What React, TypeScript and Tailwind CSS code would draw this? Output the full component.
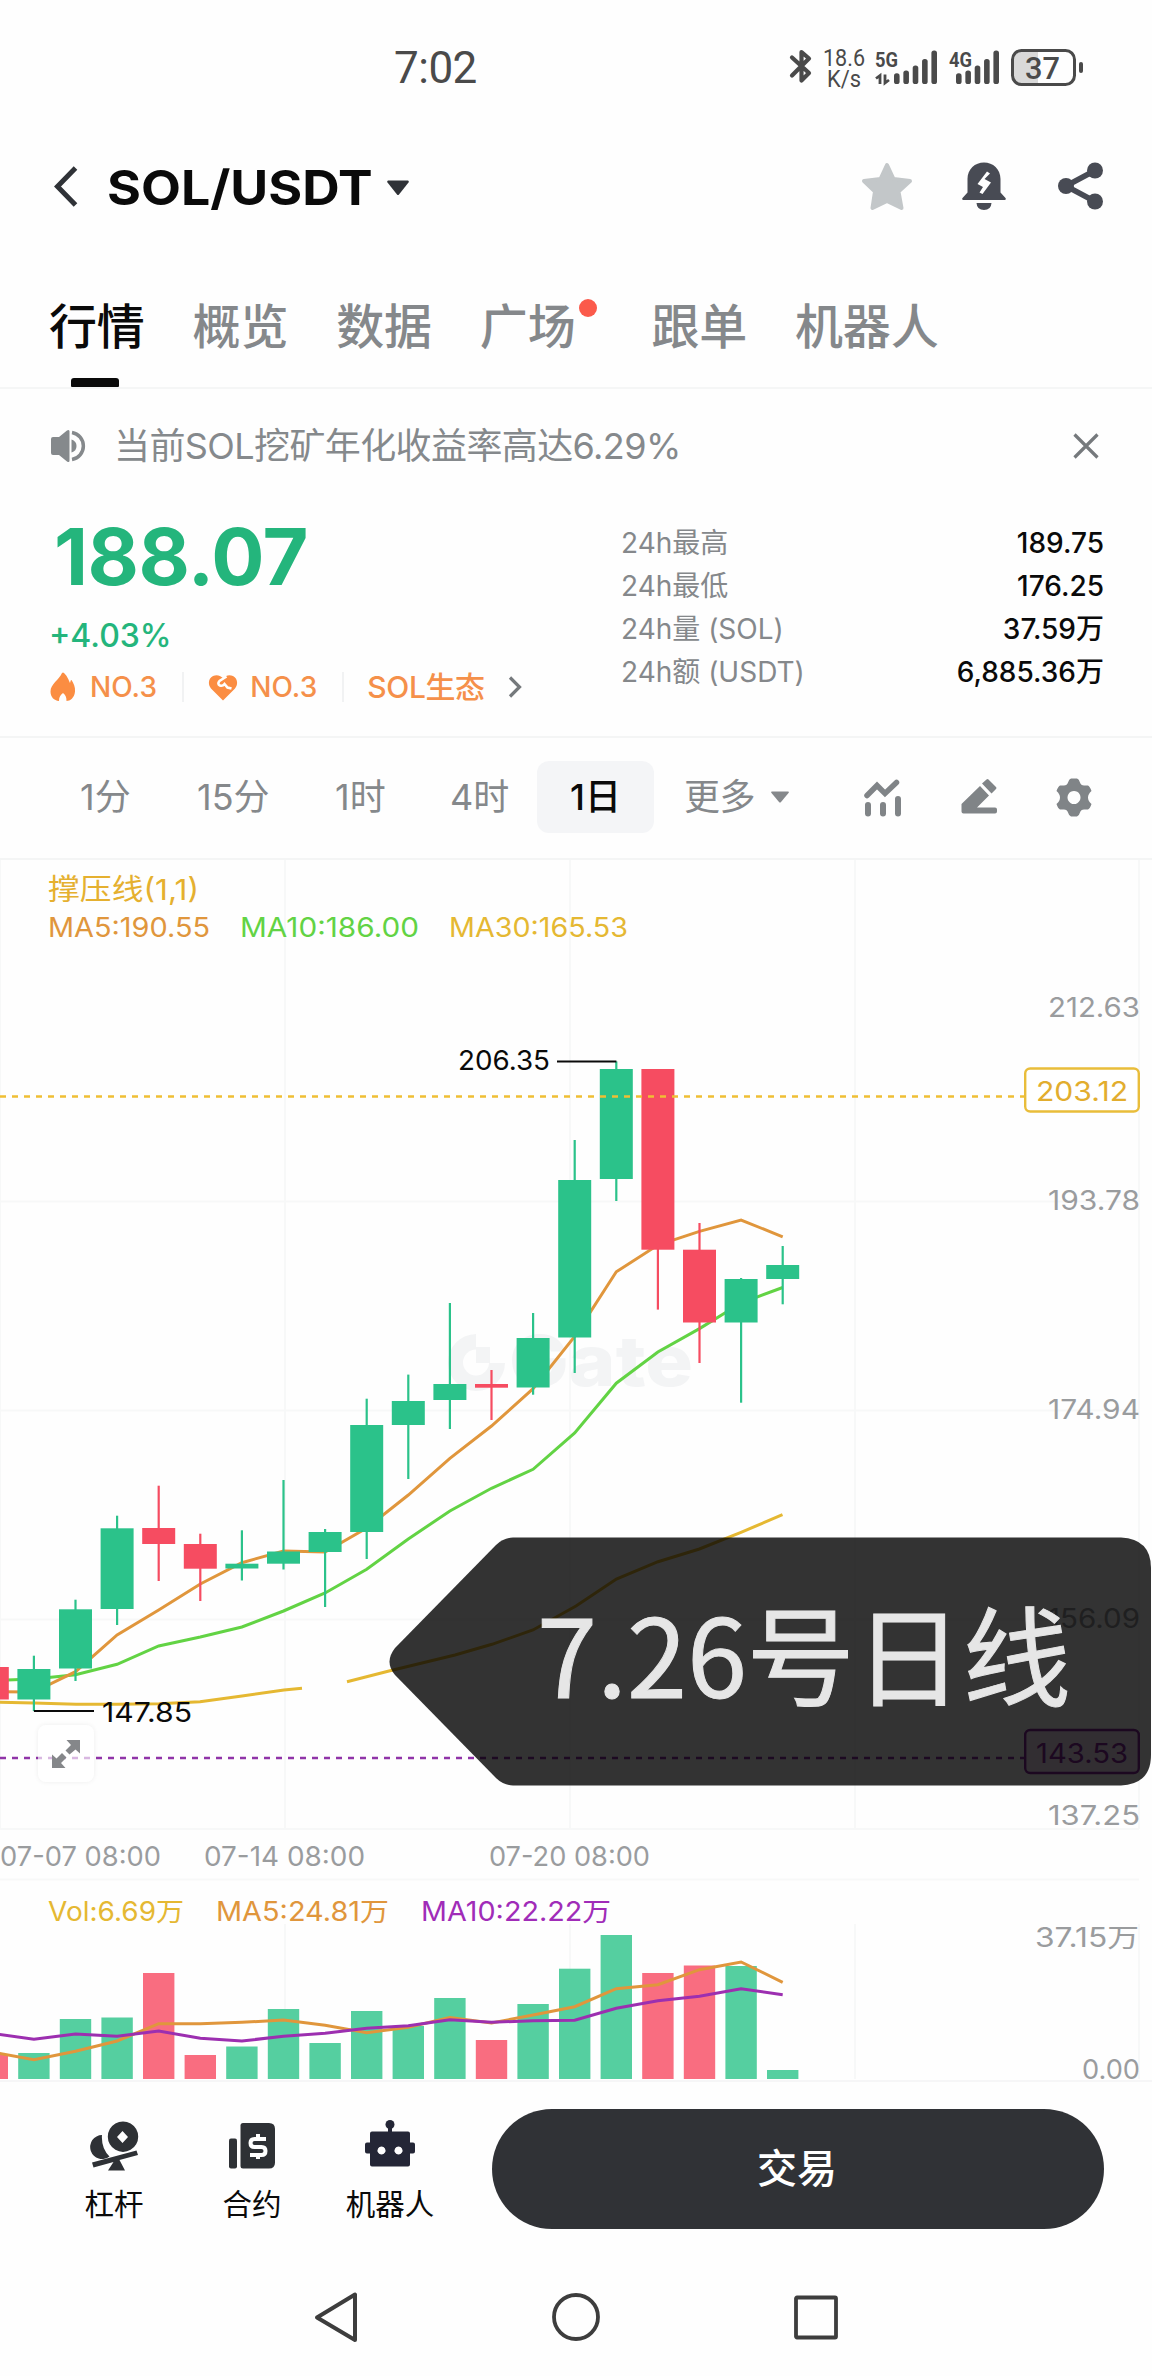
import type { ReactNode } from 'react'

type Candle = {
  up: boolean
  high: number
  top: number
  bottom: number
  low: number
  vol: number
}

const UP = '#2bc28a'
const DOWN = '#f64c61'

// ─── Chart data, in chart units (first candle is cut by the left edge) ──────
const candles: Candle[] = [
  { up: false, high: 1667, top: 1667, bottom: 1699.5, low: 1699.5, vol: 2054 },
  { up: true, high: 1655.7, top: 1669, bottom: 1699.5, low: 1711, vol: 2053 },
  { up: true, high: 1599.7, top: 1609.3, bottom: 1668.5, low: 1681, vol: 2019 },
  { up: true, high: 1515.7, top: 1528.3, bottom: 1609, low: 1625, vol: 2017.5 },
  { up: false, high: 1485.7, top: 1528, bottom: 1544, low: 1581, vol: 1973 },
  { up: false, high: 1533.7, top: 1544, bottom: 1568.7, low: 1601, vol: 2055 },
  { up: true, high: 1530.3, top: 1563.7, bottom: 1568.5, low: 1580.5, vol: 2046.5 },
  { up: true, high: 1480, top: 1551.5, bottom: 1563.7, low: 1569.5, vol: 2009 },
  { up: true, high: 1529, top: 1532, bottom: 1552, low: 1607, vol: 2043 },
  { up: true, high: 1398.7, top: 1425, bottom: 1532, low: 1559, vol: 2011 },
  { up: true, high: 1374.6, top: 1401, bottom: 1425, low: 1479, vol: 2026 },
  { up: true, high: 1303, top: 1384, bottom: 1400, low: 1429, vol: 1998 },
  { up: false, high: 1370, top: 1384, bottom: 1387.7, low: 1420, vol: 2040 },
  { up: true, high: 1313, top: 1338, bottom: 1387.5, low: 1394.7, vol: 2004 },
  { up: true, high: 1140, top: 1180, bottom: 1337.5, low: 1373, vol: 1968.7 },
  { up: true, high: 1061.4, top: 1069, bottom: 1179, low: 1201, vol: 1935 },
  { up: false, high: 1069, top: 1069, bottom: 1249.7, low: 1309.6, vol: 1973 },
  { up: false, high: 1223, top: 1249.7, bottom: 1322.5, low: 1363, vol: 1965.5 },
  { up: true, high: 1278, top: 1279, bottom: 1322.5, low: 1402.7, vol: 1966 },
  { up: true, high: 1246, top: 1265, bottom: 1279, low: 1304.3, vol: 2070 },
]

const ma5 = [1691.7, 1692, 1671.7, 1635, 1610, 1584, 1562.7, 1551, 1552, 1528, 1495, 1458.3, 1426, 1388.7, 1336.4, 1271.8, 1245, 1231.4, 1220, 1236.8]
const ma10 = [1680.5, 1679, 1674.7, 1664.3, 1646, 1637, 1627, 1611, 1593, 1569.3, 1539, 1511, 1488.3, 1469.3, 1433, 1383.2, 1352, 1328.6, 1303, 1287.5]
const volMa5 = [2052, 2059.7, 2051.3, 2041, 2023.7, 2023.7, 2022.3, 2020, 2025.3, 2032.7, 2027.3, 2017.5, 2023, 2015, 2006.7, 1988.7, 1984.7, 1969.7, 1962, 1982.3]
const volMa10 = [2033.5, 2039.3, 2034, 2036.3, 2031, 2038.3, 2041, 2036.3, 2033.3, 2028.3, 2025.7, 2019.7, 2022.3, 2020.7, 2020.3, 2008.3, 2000.7, 1996.3, 1988.7, 1994.7]

const cx = (i: number) => 33.9 + 41.6 * (i - 1)
const line = (ys: number[]) => ys.map((y, i) => `${cx(i)},${y}`).join(' ')

const axisLabels: [string, number][] = [
  ['212.63', 1016.8],
  ['193.78', 1210],
  ['174.94', 1419],
  ['156.09', 1628],
  ['137.25', 1824.7],
]

const tabs = ['行情', '概览', '数据', '广场', '跟单', '机器人']

const stats = [
  ['24h最高', '189.75'],
  ['24h最低', '176.25'],
  ['24h量 (SOL)', '37.59万'],
  ['24h额 (USDT)', '6,885.36万'],
]

// Text stretched to a fixed width
function T({ x, y, w, fill, size, children }: { x: number; y: number; w: number; fill?: string; size?: number; children: string }) {
  return (
    <text x={x} y={y} textLength={w} lengthAdjust="spacingAndGlyphs" fill={fill} fontSize={size}>{children}</text>
  )
}

// ─── Status bar ─────────────────────────────────────────────────────────────
function SignalBars({ label, x0, data }: { label: string; x0: number; data?: boolean }) {
  return (
    <g fill="#4a4a4a">
      <text x={x0} y="37" fontSize="21" fontWeight="700" textLength="23" lengthAdjust="spacingAndGlyphs">{label}</text>
      {[10.7, 13.5, 18.5, 25, 33.5].map((h, i) => (
        <rect key={i} x={x0 + (data ? 19 : 7) + i * 9.35} y={54 - h} width="5.6" height={h} rx="2.6" />
      ))}
      {data && <path d="M4.500 54V45.500L0.500 48.500M9.500 44.500V53L13.500 50" transform={`translate(${x0 + 0.5} 0)`} fill="none" stroke="#4a4a4a" strokeWidth="2.800" />}
    </g>
  )
}

function StatusBar() {
  return (
    <div className="flex h-[136px] items-center justify-between pl-[394px] pr-[66px]">
      <span className="font-[Roboto] text-[44px] leading-none tracking-[-0.5px] text-[#4a4a4a]">7:02</span>
      <svg width="304" height="76" viewBox="0 0 304 76" fontFamily="Roboto">
        {/* bluetooth */}
        <path d="M9 28L26 43.500L18.500 51V22.500L26 29L9 46" transform="translate(1 -0.5)" fill="none" stroke="#4a4a4a" strokeWidth="4.200" strokeLinejoin="round" strokeLinecap="round" />
        <g fill="#4a4a4a" fontSize="24">
          <T x={41} y={36} w={42}>18.6</T>
          <T x={45} y={56.5} w={34}>K/s</T>
        </g>
        <SignalBars label="5G" x0={93} data />
        <SignalBars label="4G" x0={167} />
        <path d="M239 20.500h17v34h-17q-8-1-8-9V29q0-8 8-8.500z" fill="#d9d9d9" />
        <rect x="230.500" y="20.500" width="62" height="34" rx="9" fill="none" stroke="#4a4a4a" strokeWidth="3" />
        <rect x="297" y="32" width="4" height="11" rx="2" fill="#4a4a4a" />
        <text x="243" y="48.500" fontSize="32" fontWeight="500" fill="#4a4a4a" textLength="35" lengthAdjust="spacingAndGlyphs">37</text>
      </svg>
    </div>
  )
}

// ─── Header ─────────────────────────────────────────────────────────────────
function Header() {
  return (
    <header className="flex h-[102px] items-center pl-[52px] pr-12">
      <svg width="28" height="42" viewBox="0 0 28 42" fill="none" stroke="#2f3237" strokeWidth="5">
        <path d="M23.500 2L5.500 20.500L23.500 39" />
      </svg>
      <h1 className="ml-[27px] mt-0.5 w-[265px] text-[48px] font-bold leading-none text-[#0a0a0a]">
        <span className="inline-block origin-left scale-x-[1.08]">SOL/USDT</span>
      </h1>
      <svg width="24" height="16" viewBox="0 0 24 16" className="ml-3.5 mt-0.5" fill="#2f3237">
        <path d="M2 0.500h20q1.500 0.500 0.500 2L13 14.500q-1 1-2 0L1.500 2.500q-1-1.500 0.500-2z" />
      </svg>
      <div className="ml-auto flex items-center gap-[49px]">
        <svg width="52" height="50" viewBox="0 0 52 50" fill="#c3c7c9" stroke="#c3c7c9" strokeWidth="4" strokeLinejoin="round" className="mb-[3px]">
          <path d="M26 4L32.500 18L49 20L37.500 30.500L40.500 47L26 40L11.500 47L14 30.500L3 20L19.500 18Z" />
        </svg>
        <svg width="44" height="50" viewBox="0 0 44 50" fill="#484b54" className="mb-[3px]">
          <path d="M5.500 18C5.500 8 13 1.500 22 1.500S38.500 8 38.500 18v13.500L43.500 37q1 2-1 2h-41q-2 0-1-2L5.500 31.500zM14.500 42h15q-0.500 7-7.500 7t-7.500-7z" />
          <path d="M25 10.500L15.500 23L21 26L17.500 31.500L20.500 33L29 21.500L22.500 18L28 12.500z" fill="#fff" />
        </svg>
        <svg width="46" height="50" viewBox="0 0 46 50" fill="#484b54" className="mb-[3px] ml-[3px]">
          <path d="M8 25L37 9.500M8 25L37 40.500" stroke="#484b54" strokeWidth="5.500" />
          <circle cx="8" cy="25" r="8" />
          <circle cx="37" cy="9.500" r="8" />
          <circle cx="37" cy="40.500" r="8" />
        </svg>
      </div>
    </header>
  )
}

function Tabs() {
  return (
    <nav className="flex h-[151px] items-stretch gap-12 border-b-2 border-[#f5f6f6] px-[49px]">
      {tabs.map((t, i) => (
        <div key={t} className={`relative pt-[53px] text-[48px] font-medium leading-[72px] tracking-[-0.2px] ${i === 0 ? 'text-[#0a0a0a]' : 'text-[#85888b]'} ${t === '广场' ? 'pr-7' : ''}`}>
          {t}
          {i === 0 && <span className="absolute bottom-0 left-[22px] h-[9px] w-12 rounded-t-[3px] rounded-b-[1px] bg-[#0a0a0a]" />}
          {t === '广场' && <span className="absolute right-[6px] top-[61px] size-[18px] rounded-full bg-[#fb5a4b]" />}
        </div>
      ))}
    </nav>
  )
}

function Notice() {
  return (
    <div className="flex h-[113px] items-center pl-[51px] pr-[53px] text-[#85898c]">
      <svg width="36" height="34" viewBox="0 0 36 34" fill="#85898c">
        <path d="M0 10q0-2 2-2h6L16 1.500q2.500-1.500 2.500 1v29q0 2.500-2.500 1L8 26H2q-2 0-2-2z" />
        <path d="M20.500 10.500q5 1.500 5 6.500t-5 6.500z" />
        <path d="M21 3.500A13.700 13.700 0 0 1 21 30.500" fill="none" stroke="#85898c" strokeWidth="3.500" />
      </svg>
      <p className="ml-[27px] text-[36px] leading-none tracking-[-0.6px]">当前SOL挖矿年化收益率高达6.29%</p>
      <svg width="26" height="26" viewBox="0 0 26 26" className="ml-auto" stroke="#75797c" strokeWidth="3.200">
        <path d="M1.500 1.500L24.500 24.500M24.500 1.500L1.500 24.500" />
      </svg>
    </div>
  )
}

// ─── Price summary ──────────────────────────────────────────────────────────
function Badge({ children }: { children: ReactNode }) {
  return (
    <div className="flex h-[30px] items-center border-r-2 border-[#f1f2f3] pr-[25px] text-[28px] font-medium tracking-[0.1px]">
      {children}
    </div>
  )
}

function Summary() {
  return (
    <section className="flex h-[236px] justify-between border-b-2 border-[#f4f5f5] pl-[49px] pr-12">
      <div>
        <p className="pl-[5px] text-[79px] font-bold leading-[108px] tracking-[-0.5px] text-[#24b57c]">188.07</p>
        <p className="mt-px text-[32px] font-medium leading-[50px] text-[#24b57c]">+4.03%</p>
        <div className="mt-[10px] flex h-8 items-center text-[#f5904a]">
          <Badge>
            <svg width="26" height="30" viewBox="0 0 26 30" fill="#fb8d42" className="ml-px mr-[14px]">
              <path d="M12 1q1-1 2 0c4 4 4.500 7 6 10 0.500-1.500 0.500-3 1.500-3 2 3 4 7 3.500 11.500C24.500 26 20 29 16.500 29c0-4-1-6-3.500-8-2.500 2-4 4-4 8C4 28.500 0.500 25 0.500 19.500 0.500 12 9 8 12 1z" />
            </svg>
            NO.3
          </Badge>
          <Badge>
            <svg width="30" height="27" viewBox="0 0 30 27" fill="#fb8d42" className="ml-6 mr-[12px]">
              <path d="M15 26.500L3 14.500C-0.500 10.500 0.500 4 5 2c4-1.800 7-0.500 10 2 3-2.500 6-3.800 10-2 4.500 2 5.500 8.500 2 12.500z" />
              <path d="M18.500 2.500L11.500 7q-2.500 3 0.500 4.500 2.500 1 4.500-1.500l3 3.500 4 1" fill="none" stroke="#fefefe" strokeWidth="2.600" />
            </svg>
            NO.3
          </Badge>
          <span className="ml-[23px] text-[30px] font-medium tracking-[-0.4px]">SOL生态</span>
          <svg width="14" height="22" viewBox="0 0 14 22" fill="none" stroke="#75797c" strokeWidth="3.200" className="ml-[23px]">
            <path d="M2 1.500L11.500 11L2 20.500" />
          </svg>
        </div>
      </div>
      <dl className="mt-[19px] w-[483px]">
        {stats.map(([k, v]) => (
          <div key={k} className="flex h-[43.2px] items-center justify-between text-[28px] leading-none">
            <dt className="text-[#85888b]">{k}</dt>
            <dd className="font-medium text-[#0a0a0a]">{v}</dd>
          </div>
        ))}
      </dl>
    </section>
  )
}

// ─── Interval selector ──────────────────────────────────────────────────────
function Intervals() {
  return (
    <div className="flex h-[122px] items-center border-b-2 border-[#f4f5f5] pb-0.5 pl-[80px] text-[36px] leading-none text-[#85888b]">
      <span className="w-[117px]">1分</span>
      <span className="w-[138px]">15分</span>
      <span className="w-[115px]">1时</span>
      <span className="w-[87px]">4时</span>
      <span className="flex h-[72px] w-[117px] items-center justify-center rounded-xl bg-[#f4f5f7] font-medium text-[#0a0a0a]">1日</span>
      <span className="ml-[30px] tracking-[-0.5px]">更多</span>
      <svg width="18" height="12" viewBox="0 0 18 12" fill="#85888b" className="ml-4">
        <path d="M1 0.500h16q1.500 0 0.500 1.500L10 11q-1 1-2 0L0.500 2Q-0.500 0.500 1 0.500z" />
      </svg>
      <div className="ml-[74px] flex items-center gap-[59.5px]">
        <svg width="38" height="39" viewBox="0 0 38 39" fill="none" stroke="#808487" strokeWidth="6" strokeLinecap="round">
          <path d="M4 17.500L14 7.500L22 15.500L33.500 4.500" strokeWidth="5.500" />
          <path d="M5 27V35.500M20 27V35.500M35 21V35.500" />
        </svg>
        <svg width="36" height="38" viewBox="0 0 36 38" fill="#808487">
          <path d="M0.500 26L19 8L28 17.500L16 29.500H34q2 0 2 2v2q0 2-2 2H2.500q-2 0-2-2zM21 5.500L25.500 1.500q1-1 2 0L35 9q1 1 0 2L30.500 15.500z" />
        </svg>
        <svg width="36" height="39" viewBox="0 0 36 39" fill="#808487">
          <path fillRule="evenodd" d="M15 0.500h6q2 0.500 3 4t5 3h3q2 1 3.500 5.500-3.500 3-3.500 6.500t3.500 6.500Q34 30.500 32 31.500h-3q-4-0.500-5 3t-3 4h-6q-2-0.500-3-4t-5-3H4Q2 30.500 0.500 26 4 23 4 19.500T0.500 13Q2 8.500 4 7.500h3q4 0.500 5-3t3-4zM18 13a6.500 6.500 0 1 0 0.010 0z" />
        </svg>
      </div>
    </div>
  )
}

// ─── Candle and volume chart ────────────────────────────────────────────────
function Chart() {
  return (
    <div className="relative h-[1220px]">
      <svg width="1152" height="1220" viewBox="0 860 1152 1220" fontSize="26.500" className="block overflow-visible">
        {/* grid */}
        <g stroke="#f7f8f8" strokeWidth="2">
          <path d="M0 860V1829M285 860V1829M570 860V1829M855 860V1829M1139 860V1829" />
          <path d="M0 1201.500H1139M0 1410.500H1139M0 1619.500H1139M0 1829H1139M0 1879.500H1139" />
          <path d="M285 1924V2079M570 1924V2079M855 1924V2079M1139 1924V2079" />
        </g>

        {/* watermark */}
        <g fill="#f3f4f5">
          <path d="M476 1334A28.500 28.500 0 1 0 505 1363H489A13 13 0 1 1 476 1349.500z" />
          <path d="M476 1347h14v16h-14z" />
          <text x="509" y="1386" fontSize="70" fontWeight="800" textLength="184" lengthAdjust="spacingAndGlyphs">Gate</text>
        </g>

        {/* moving averages sit under the candles */}
        <g fill="none" strokeWidth="3">
          <path d="M0 1702.300L34 1703L76 1704.300H117L159 1703.700L200 1701.700L242 1696L284 1690L302 1688.300" stroke="#e5b832" />
          <path d="M347 1681.700L389 1671L455 1655L492 1644.300L533 1630L576 1606L616.400 1579L658 1561.700L699.400 1549L741 1532.300L782.500 1514.700" stroke="#e5b832" />
          <polyline points={line(ma10)} stroke="#62d344" />
          <polyline points={line(ma5)} stroke="#e0963c" />
        </g>

        {candles.map((c, i) => (
          <g key={i} fill={c.up ? UP : DOWN}>
            <rect x={cx(i) - 1.1} y={c.high} width="2.200" height={c.low - c.high} />
            <rect x={cx(i) - 16.5} y={c.top} width="33" height={c.bottom - c.top} />
          </g>
        ))}

        {/* support / resistance lines */}
        <path d="M0 1096.500H1024" stroke="#efbf34" strokeWidth="2.400" strokeDasharray="6 6" />
        <path d="M0 1758H1024" stroke="#9034a8" strokeWidth="2.400" strokeDasharray="6 6" />

        {/* high and low marks */}
        <path d="M557 1061.500H616.400M33.900 1711H94" stroke="#0a0a0a" strokeWidth="2" />
        <T x={458} y={1070} w={92} fill="#0a0a0a">206.35</T>
        <T x={102} y={1722} w={90} fill="#0a0a0a">147.85</T>

        <g fill="#9a9c9e">
          {axisLabels.map(([t, y]) => (
            <T key={t} x={1048} y={y} w={92}>{t}</T>
          ))}
          <T x={0} y={1866} w={161}>07-07 08:00</T>
          <T x={204} y={1866} w={161}>07-14 08:00</T>
          <T x={489} y={1866} w={161}>07-20 08:00</T>
          <T x={1035} y={1947} w={104}>37.15万</T>
          <T x={1082} y={2078.5} w={58}>0.00</T>
        </g>

        <rect x="1025.200" y="1068.500" width="113.600" height="43" rx="5" fill="#fff" stroke="#e9bd3a" strokeWidth="2.400" />
        <T x={1036} y={1100.5} w={92} fill="#e2ad2e">203.12</T>
        <rect x="1025.200" y="1730" width="113.600" height="43" rx="5" fill="#f7e6fa" stroke="#8a2ba0" strokeWidth="2.400" />
        <T x={1036} y={1762.5} w={92} fill="#8a2ba0">143.53</T>

        {/* legends */}
        <T x={48} y={900} w={151} size={29} fill="#e5b02f">撑压线(1,1)</T>
        <T x={48} y={937} w={162} fill="#e0963c">MA5:190.55</T>
        <T x={240} y={937} w={179} fill="#62d344">MA10:186.00</T>
        <T x={449} y={937} w={179} fill="#e5b832">MA30:165.53</T>

        {/* volume */}
        {candles.map((c, i) => (
          <rect key={i} x={cx(i) - 15.7} y={c.vol} width="31.400" height={2079 - c.vol} fill={c.up ? '#55cfa0' : '#f96d80'} />
        ))}
        <g fill="none" strokeWidth="3">
          <polyline points={line(volMa5)} stroke="#e0963c" />
          <polyline points={line(volMa10)} stroke="#9c2fb0" />
        </g>
        <T x={48} y={1921} w={136} fill="#e5b832">Vol:6.69万</T>
        <T x={216} y={1921} w={173} fill="#e0963c">MA5:24.81万</T>
        <T x={421} y={1921} w={190} fill="#a02cb8">MA10:22.22万</T>
      </svg>

      {/* expand button */}
      <div className="absolute left-[38px] top-[865px] flex h-[57px] w-[56px] items-center justify-center rounded-lg bg-white/65 shadow-[0_0_5px_rgba(0,0,0,0.07)]">
        <svg width="28" height="28" viewBox="0 0 28 28" fill="#85878a">
          <path d="M14.500 0H28V13.500L23.500 9.500L17.500 14.500L13.500 10.500L19 5zM0 14.500L4.500 18.500L10 13L14.500 17.500L9 23L13.500 28H0z" />
        </svg>
      </div>

      {/* callout */}
      <div className="absolute left-[389px] top-[677px] h-[249px] w-[763px]">
        <svg width="763" height="249" viewBox="0 0 763 249" fill="#000" fillOpacity="0.8" className="absolute inset-0">
          <path d="M124 0.500H732Q762 2 762 31V218Q762 247 732 248.500H124Q114 248 107 241L6 138Q-5 125 6 111L107 8Q114 1 124 0.500Z" />
        </svg>
        <span className="absolute left-[148px] top-[36px] whitespace-nowrap font-['Noto_Sans_CJK_SC'] text-[108px] leading-[156px] text-[#e6e6e6] [-webkit-text-stroke:1px_#e6e6e6]">7.26号日线</span>
      </div>
    </div>
  )
}

// ─── Bottom bar ─────────────────────────────────────────────────────────────
function Action({ label, children, className }: { label: string; children: ReactNode; className: string }) {
  return (
    <div className={`flex flex-col items-center pt-2 ${className}`}>
      <svg width="52" height="52" viewBox="0 0 52 52" fill="#2e3135">{children}</svg>
      <span className="mt-[11px] text-[29.5px] leading-[44px] text-[#0a0a0a]">{label}</span>
    </div>
  )
}

function BottomBar() {
  return (
    <div className="flex h-[177px] items-center border-t-2 border-[#f6f6f7] pb-0.5 pl-[84px] pr-12">
      <Action label="杠杆" className="w-[60px]">
        <path d="M14 16A12 12 0 1 0 21.500 37.500Q13 29 14 16z" />
        <path fillRule="evenodd" d="M35 2.500a15.200 15.200 0 1 0 0.010 0zM34.500 12L40 18L34.500 24L29 18z" />
        <path d="M4 43.500L48.500 31.500L50 36L31.500 41L37 51.500H20L25.500 43L5.500 48.500z" />
      </Action>
      <Action label="合约" className="ml-[78px] w-[60px]">
        <rect x="3" y="19.500" width="8" height="30" rx="2" />
        <path d="M17 4h26q6 0 6 6v33.500q0 6-6 6H17q-2.500 0-2.500-2.500V6.500Q14.500 4 17 4z" />
        <path d="M40 20H28.500q-4 0-4 4t4 4h7q4 0 4 4t-4 4H24M32 15V20M32 36V40" fill="none" stroke="#fff" strokeWidth="4" />
      </Action>
      <Action label="机器人" className="ml-[63px] w-[90px]">
        <g fill="#242636">
          <circle cx="26" cy="5.500" r="4.500" />
          <path d="M24 8h4v5h-4z" />
          <path fillRule="evenodd" d="M8 12.500h36q2 0 2 2v9h3q2 0 2 2v7q0 2-2 2h-3v11q0 2-2 2H8q-2 0-2-2v-11H3q-2 0-2-2v-7q0-2 2-2h3v-9q0-2 2-2zM17.500 27.500a4 4 0 1 0 0.010 0zM34.500 27.500a4 4 0 1 0 0.010 0z" />
        </g>
      </Action>
      <button className="ml-auto h-[120px] w-[612px] rounded-full bg-[#303236] pr-0.5 text-[40px] font-medium text-white">交易</button>
    </div>
  )
}

function SystemNav() {
  return (
    <div className="flex h-[119px] items-center justify-center gap-[192px]">
      <svg width="46" height="54" viewBox="0 0 46 54" fill="none" stroke="#3d3d3d" strokeWidth="4" strokeLinejoin="round">
        <path d="M42 4.500V50L4 27.500z" />
      </svg>
      <svg width="50" height="50" viewBox="0 0 50 50" fill="none" stroke="#3d3d3d" strokeWidth="3.800">
        <circle cx="25" cy="25" r="22" />
      </svg>
      <svg width="46" height="46" viewBox="0 0 46 46" fill="none" stroke="#3d3d3d" strokeWidth="3.800">
        <rect x="3" y="3.500" width="40" height="40" rx="1" />
      </svg>
    </div>
  )
}

export default function App() {
  return (
    <main className="w-[1152px] overflow-hidden bg-[#fefefe] font-[Inter,'Noto_Sans_CJK_SC',sans-serif]">
      <StatusBar />
      <Header />
      <Tabs />
      <Notice />
      <Summary />
      <Intervals />
      <Chart />
      <BottomBar />
      <SystemNav />
    </main>
  )
}
